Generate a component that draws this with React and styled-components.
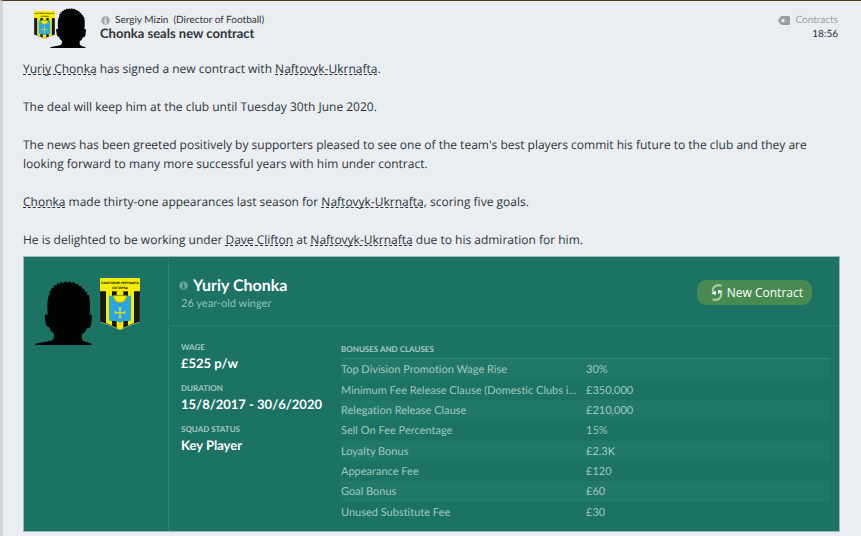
import React from 'react';
import styled, { createGlobalStyle } from 'styled-components';

const GlobalStyle = createGlobalStyle`
* {
    box-sizing: border-box;
}

body {
    margin: 0;
    background: #eaeef2;
    color: #2c3338;
    font-family: Lato, "Liberation Sans", sans-serif;
    font-size: 13px;
    font-variant-ligatures: none;
    line-height: 19px;
    text-rendering: geometricPrecision;
}

h1, h2, h3, p, dl, dd {
    margin: 0;
}
`

const Page = styled.main`
border-top: 1px solid #4f3d1e;
border-left: 3px solid #ccd5da;
padding: 7px 21px 4px 20px;
min-height: 100vh;
`
const MailHeader = styled.header`
display: flex;
height: 40px;
margin-bottom: 11px;
padding: 0 2px 0 10px;
`
const SenderPictures = styled.div`
display: flex;
width: 67px;

> svg:first-child {
    margin: 3px -5px 0 1px;
}
`
const MailTitle = styled.div`
flex: 1;
padding-top: 5px;
`
const Sender = styled.p`
display: flex;
align-items: center;
gap: 5px;
padding-left: 1px;
font-size: 10px;
line-height: 14px;
`
const Subject = styled.h1`
font-size: 13px;
font-weight: 700;
line-height: 13px;
`
const MailMeta = styled.div`
padding-top: 5px;
font-size: 10px;
line-height: 14px;
text-align: right;
`
const Category = styled.p`
display: flex;
align-items: center;
gap: 5px;
color: #9b9fa2;
`
const Article = styled.article`
font-family: "Open Sans", "Liberation Sans", sans-serif;
font-size: 12px;
`
const Paragraph = styled.p`
margin-bottom: 19px;

&:last-child {
    margin-bottom: 7px;
}
`
const MailLink = styled.a`
color: inherit;
text-decoration: underline dashed 1px;
text-decoration-skip-ink: none;
text-underline-offset: 1px;
`
const Card = styled.section`
display: grid;
grid-template-columns: 144px 1fr;
border: 1px solid #9fb9b8;
background: #1c7263;
color: #fff;
`
const CardPictures = styled.div`
display: flex;
gap: 8px;
padding: 21px 0 0 11px;

> svg:first-child {
    margin-top: 3px;
}
`
const CardMain = styled.div`
border-left: 1px solid #268373;
`
const CardHeader = styled.header`
display: flex;
align-items: center;
justify-content: space-between;
height: 69px;
padding: 3px 27px 0 10px;
border-bottom: 1px solid #268373;
`
const PlayerTitle = styled.div`
padding-top: 2px;
`
const PlayerName = styled.h2`
display: flex;
align-items: center;
gap: 5px;
font-size: 16px;
font-weight: 700;
line-height: 20px;
`
const PlayerInfo = styled.p`
padding-left: 2px;
color: #94c1b7;
font-size: 11px;
line-height: 16px;
`
const ContractButton = styled.button`
display: flex;
align-items: center;
gap: 4px;
height: 25px;
padding: 0 9px 0 14px;
border: 0;
border-radius: 9px;
background: #478a52;
color: #fff;
font-family: "Open Sans", "Liberation Sans", sans-serif;
font-size: 12px;
cursor: pointer;
`
const CardBody = styled.div`
display: grid;
grid-template-columns: 160px 1fr;
padding: 15px 9px 9px 12px;
`
const Term = styled.dt`
color: #a5cac2;
font-size: 8px;
font-weight: 700;
line-height: 12px;
text-transform: uppercase;
`
const Value = styled.dd`
padding-bottom: 9px;
font-size: 13px;
font-weight: 700;
line-height: 20px;
`
const Clauses = styled.div`
padding-top: 2px;
`
const ClausesTitle = styled.h3`
padding-bottom: 3px;
border-bottom: 1px solid #2e8475;
color: #a5cac2;
font-size: 8px;
font-weight: 700;
line-height: 12px;
text-transform: uppercase;
`
const ClauseTable = styled.table`
width: 100%;
height: 163px;
table-layout: fixed;
border-collapse: collapse;
color: #a0c8bf;
font-size: 11px;
line-height: 18px;
text-align: left;
`
const ClauseRow = styled.tr`
&:nth-child(odd) {
    background: #21786a;
}
`
const ClauseName = styled.th`
width: 245px;
padding: 2px 6px 0 0;
overflow: hidden;
font-weight: 400;
text-overflow: ellipsis;
white-space: nowrap;
`
const ClauseValue = styled.td`
padding: 2px 0 0;
`

const clauses = [
    ['Top Division Promotion Wage Rise', '30%'],
    ['Minimum Fee Release Clause (Domestic Clubs i...', '£350,000'],
    ['Relegation Release Clause', '£210,000'],
    ['Sell On Fee Percentage', '15%'],
    ['Loyalty Bonus', '£2.3K'],
    ['Appearance Fee', '£120'],
    ['Goal Bonus', '£60'],
    ['Unused Substitute Fee', '£30']
];

const Silhouette = ({ width, height }) => (
    <svg width={width} height={height} viewBox="0 0 171 192" preserveAspectRatio="none" aria-hidden="true">
        <path
            fill="#020303"
            d="M0 192 Q2 186 24 184 L48 179 Q57 176 57 166 V158 Q45 150 42 138 Q34 140 32 126 L29 106 Q29 97 38 101 L37 76 Q37 50 45 37 L43 31 50 28 49 20 57 21 56 13 65 14 66 7 75 9 77 2 86 6 91 1 97 5 105 1 109 6 118 3 121 9 130 9 131 15 140 16 140 22 149 25 148 31 157 34 155 40 162 43 Q166 60 165 82 L164 101 Q171 98 171 108 L168 131 Q166 143 157 140 Q153 153 141 160 V173 Q142 180 154 183 L169 188 V192Z"
        />
    </svg>
)

const Crest = ({ width, height }) => (
    <svg width={width} height={height} viewBox="0 0 120 158" preserveAspectRatio="none" aria-hidden="true">
        <path fill="#171717" d="M1 36H119V134Q98 138 60 157Q22 138 1 134Z" />
        <path fill="#f5ed00" d="M0 0H120V40H0Z" />
        <path fill="#f5ed00" d="M18 38H36V144L18 137ZM50 38H70V153L60 158 50 153ZM84 38H102V137L84 144Z" />
        <path fill="#2ea6e6" d="M27 54H93V126Q93 131 82 131H68L60 137 52 131H38Q27 131 27 126Z" />
        <path fill="#f5ed00" stroke="#77810b" strokeWidth="2" d="M39 53Q42 75 60 75Q78 75 81 53Z" />
        <path fill="none" stroke="#e6df16" strokeWidth="4" d="M60 91V120M45 105H75M56 91H64M56 120H64M46 101V109M74 101V109" />
        <text x="60" y="19" textAnchor="middle" fontFamily="Liberation Sans" fontWeight="700" fontSize="10">НАФТОВИК-УКРНАФТА</text>
        <text x="60" y="34" textAnchor="middle" fontFamily="Liberation Sans" fontWeight="700" fontSize="10">ОХТИРКА</text>
        <path fill="none" stroke="#bfc69a" strokeWidth="2" d="M1 134Q25 140 60 157Q95 140 119 134" />
    </svg>
)

const InfoIcon = ({ color, mark }) => (
    <svg width="9" height="9" viewBox="0 0 9 9" aria-hidden="true">
        <circle cx="4.5" cy="4.5" r="4.3" fill={color} />
        <path fill={mark} d="M3.8 1.4h1.5v1.3H3.8zM3.3 3.6h2v2.9h.6v.9H3.2v-.9h.6v-2h-.5z" />
    </svg>
)

const TagIcon = () => (
    <svg width="12" height="9" viewBox="0 0 12 9" aria-hidden="true">
        <path fill="#9b9fa2" fillRule="evenodd" d="M4 0H11Q12 0 12 1V8Q12 9 11 9H4Q2.500 9 0 4.500Q2.500 0 4 0ZM5 2.800A1.700 1.700 0 1 0 5 6.200A1.700 1.700 0 1 0 5 2.800Z" />
    </svg>
)

const ContractIcon = () => (
    <svg width="12" height="17" viewBox="0 0 12 17" aria-hidden="true">
        <g fill="none" stroke="#a9cbad" strokeWidth="2.2">
            <path d="M10.500 1.800Q6 0 3 3Q1 5 2.500 9" />
            <path d="M1.500 15.200Q6 17 9 14Q11 11 9.500 7" />
        </g>
        <path fill="#fff" d="M0.500 9.500L5 6.800 4.800 11ZM11.500 7.200L7 10 7.200 5.800Z" />
    </svg>
)

const Club = () => <MailLink href="#club">Naftovyk-Ukrnafta</MailLink>

const App = () => (
    <>
        <GlobalStyle />
        <Page>
            <MailHeader>
                <SenderPictures>
                    <Crest width={21} height={28} />
                    <Silhouette width={36} height={40} />
                </SenderPictures>
                <MailTitle>
                    <Sender>
                        <InfoIcon color="#a3a7aa" mark="#eaeef2" />
                        <span>Sergiy Mizin</span>
                        <span>(Director of Football)</span>
                    </Sender>
                    <Subject>Chonka seals new contract</Subject>
                </MailTitle>
                <MailMeta>
                    <Category><TagIcon />Contracts</Category>
                    <time>18:56</time>
                </MailMeta>
            </MailHeader>
            <Article>
                <Paragraph>
                    <MailLink href="#player">Yuriy Chonka</MailLink> has signed a new contract with <Club />.
                </Paragraph>
                <Paragraph>The deal will keep him at the club until Tuesday 30th June 2020.</Paragraph>
                <Paragraph>
                    The news has been greeted positively by supporters pleased to see one of the team's best players commit his future to the club and they are looking forward to many more successful years with him under contract.
                </Paragraph>
                <Paragraph>
                    <MailLink href="#player">Chonka</MailLink> made thirty-one appearances last season for <Club />, scoring five goals.
                </Paragraph>
                <Paragraph>
                    He is delighted to be working under <MailLink href="#manager">Dave Clifton</MailLink> at <Club /> due to his admiration for him.
                </Paragraph>
            </Article>
            <Card>
                <CardPictures>
                    <Silhouette width={57} height={64} />
                    <Crest width={40} height={52} />
                </CardPictures>
                <CardMain>
                    <CardHeader>
                        <PlayerTitle>
                            <PlayerName><InfoIcon color="#69a69a" mark="#1c7263" />Yuriy Chonka</PlayerName>
                            <PlayerInfo>26 year-old winger</PlayerInfo>
                        </PlayerTitle>
                        <ContractButton type="button"><ContractIcon />New Contract</ContractButton>
                    </CardHeader>
                    <CardBody>
                        <dl>
                            <Term>Wage</Term>
                            <Value>£525 p/w</Value>
                            <Term>Duration</Term>
                            <Value>15/8/2017 - 30/6/2020</Value>
                            <Term>Squad status</Term>
                            <Value>Key Player</Value>
                        </dl>
                        <Clauses>
                            <ClausesTitle id="clauses">Bonuses and clauses</ClausesTitle>
                            <ClauseTable aria-labelledby="clauses">
                                <tbody>
                                    {clauses.map(([name, value]) => (
                                        <ClauseRow key={name}>
                                            <ClauseName scope="row">{name}</ClauseName>
                                            <ClauseValue>{value}</ClauseValue>
                                        </ClauseRow>
                                    ))}
                                </tbody>
                            </ClauseTable>
                        </Clauses>
                    </CardBody>
                </CardMain>
            </Card>
        </Page>
    </>
)

export default App;
